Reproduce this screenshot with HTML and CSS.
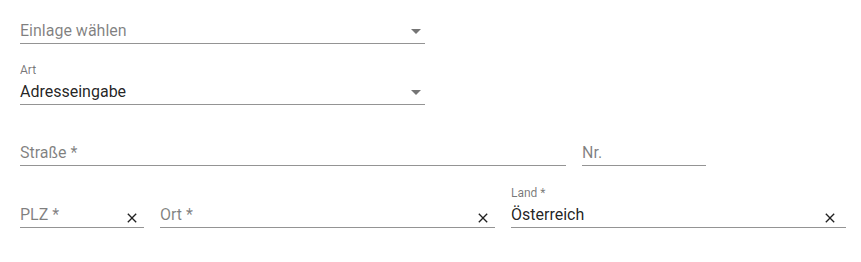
FILE: index.html
```html
<!DOCTYPE html>
<html lang="de">
<head>
<meta charset="utf-8">
<title>Adresse</title>
<link rel="stylesheet" href="styles.css">
</head>
<body>
<form class="form">
  <div class="row row-first">
    <div class="field w-half">
      <div class="control">
        <span class="text placeholder">Einlage wählen</span>
        <span class="arrow"></span>
      </div>
    </div>
  </div>
  <div class="row">
    <div class="field w-half">
      <div class="label">Art</div>
      <div class="control">
        <span class="text value">Adresseingabe</span>
        <span class="arrow"></span>
      </div>
    </div>
  </div>
  <div class="row">
    <div class="field w-street">
      <div class="control"><span class="text placeholder">Straße *</span></div>
    </div>
    <div class="field w-small">
      <div class="control"><span class="text placeholder">Nr.</span></div>
    </div>
  </div>
  <div class="row row-last">
    <div class="field w-small">
      <div class="control">
        <span class="text placeholder">PLZ *</span>
        <svg class="clear" viewBox="0 0 24 24" width="16" height="16"><path d="M19 6.41L17.59 5 12 10.59 6.41 5 5 6.41 10.59 12 5 17.59 6.41 19 12 13.41 17.59 19 19 17.59 13.41 12z"/></svg>
      </div>
    </div>
    <div class="field w-wide">
      <div class="control">
        <span class="text placeholder">Ort *</span>
        <svg class="clear" viewBox="0 0 24 24" width="16" height="16"><path d="M19 6.41L17.59 5 12 10.59 6.41 5 5 6.41 10.59 12 5 17.59 6.41 19 12 13.41 17.59 19 19 17.59 13.41 12z"/></svg>
      </div>
    </div>
    <div class="field w-wide">
      <div class="label">Land *</div>
      <div class="control">
        <span class="text value">Österreich</span>
        <svg class="clear clear-land" viewBox="0 0 24 24" width="16" height="16"><path d="M19 6.41L17.59 5 12 10.59 6.41 5 5 6.41 10.59 12 5 17.59 6.41 19 12 13.41 17.59 19 19 17.59 13.41 12z"/></svg>
      </div>
    </div>
  </div>
</form>
</body>
</html>
```
FILE: styles.css
```css
html, body {
  margin: 0;
  padding: 0;
  background: #ffffff;
}

body {
  font-family: Roboto, "Liberation Sans", sans-serif;
  -webkit-font-smoothing: antialiased;
}

.form {
  display: grid;
  grid-template-rows: 44px 61px 61px 62px;
  padding-left: 20px;
  width: 826px;
}

.row {
  display: flex;
  align-items: flex-end;
  gap: 16px;
}

.field {
  display: flex;
  flex-direction: column;
  justify-content: flex-end;
  padding-bottom: 3px;
  border-bottom: 1px solid rgba(0, 0, 0, 0.42);
}

.w-half { width: 405px; }
.w-street { width: 546px; }
.w-small { width: 124px; }
.w-wide { width: 335px; }

.label {
  font-size: 12px;
  line-height: 14px;
  color: rgba(0, 0, 0, 0.54);
  margin-bottom: 6px;
}

.control {
  display: flex;
  align-items: flex-start;
  height: 18px;
}

.text {
  flex: 1;
  font-size: 16px;
  line-height: 18px;
  white-space: nowrap;
}

.placeholder {
  color: rgba(0, 0, 0, 0.5);
}

.value {
  color: rgba(0, 0, 0, 0.87);
}

.arrow {
  width: 0;
  height: 0;
  border-left: 5px solid transparent;
  border-right: 5px solid transparent;
  border-top: 5px solid rgba(0, 0, 0, 0.54);
  margin-top: 7px;
  margin-right: 4px;
}

.clear {
  flex: none;
  margin-top: 4px;
  margin-right: 4px;
  fill: rgba(0, 0, 0, 0.87);
}

.clear-land {
  margin-right: 8px;
}
```
